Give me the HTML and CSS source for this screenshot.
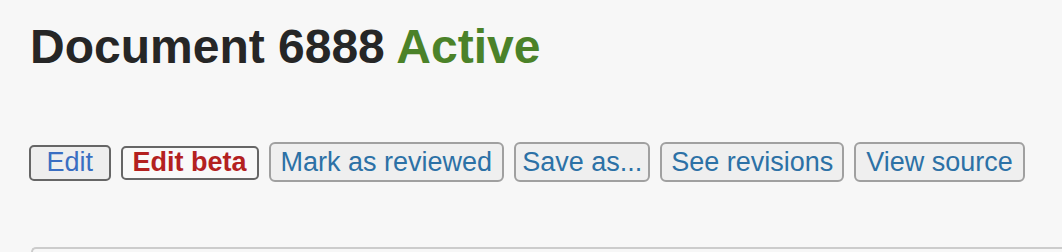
FILE: index.html
```html
<!DOCTYPE html>
<html lang="en">
<head>
<meta charset="utf-8">
<title>Document 6888</title>
<link rel="stylesheet" href="styles.css">
</head>
<body>
<div class="page">
  <h1 class="title">Document 6888 <span class="status">Active</span></h1>
  <div class="actions">
    <a class="btn btn-edit" href="#">Edit</a>
    <a class="btn btn-beta" href="#">Edit beta</a>
    <button class="btn btn-plain" type="button">Mark as reviewed</button>
    <button class="btn btn-plain btn-save" type="button">Save as...</button>
    <button class="btn btn-plain btn-tight" type="button">See revisions</button>
    <button class="btn btn-plain" type="button">View source</button>
  </div>
  <div class="card"></div>
</div>
</body>
</html>
```

FILE: styles.css
```css
html, body {
  margin: 0;
  padding: 0;
  background: #f7f7f7;
  overflow: hidden;
}

.page {
  padding: 19px 0 0 29px;
  font-family: "Liberation Sans", Arial, sans-serif;
}

.title {
  margin: 0 0 68px 1px;
  font-size: 48px;
  line-height: 55px;
  font-weight: 700;
  color: #262626;
}

.status {
  color: #4b8229;
}

.actions {
  display: flex;
  align-items: baseline;
  gap: 10px;
}

.btn {
  display: inline-block;
  box-sizing: border-box;
  font-family: "Liberation Sans", Arial, sans-serif;
  font-size: 27px;
  text-decoration: none;
  margin: 0;
  cursor: pointer;
}

.btn-edit {
  color: #3a6ec2;
  background: #eeeeee;
  border: 2px solid #666666;
  border-radius: 5px;
  line-height: 30px;
  padding: 0 15.5px 2px 15.5px;
}

.btn-beta {
  color: #b3211f;
  font-weight: 700;
  background: #f9f9f9;
  border: 2px solid #666666;
  border-radius: 5px;
  line-height: 28px;
  padding: 0 10px 2px 10px;
}

.btn-plain {
  color: #2c71a6;
  background: #efefef;
  border: 2px solid #a0a0a0;
  border-radius: 6px;
  line-height: 36px;
  padding: 0 10px;
}

.btn-save {
  padding: 0 6px;
}

.btn-tight {
  padding: 0 9px;
}

.card {
  margin: 65px 0 0 2px;
  height: 3px;
  border-top: 2px solid #cccccc;
  border-left: 2px solid #cccccc;
  border-top-left-radius: 6px;
}
```
